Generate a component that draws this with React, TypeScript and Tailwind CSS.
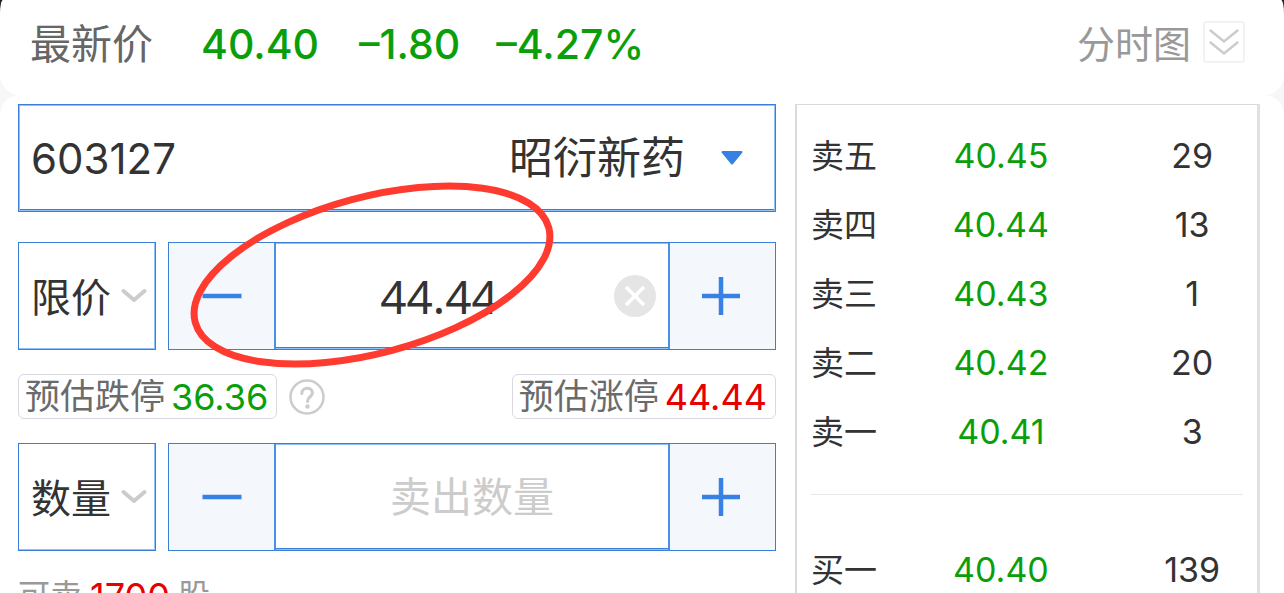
import React, { useState } from 'react';

interface QuoteLevel {
  label: string;
  price: string;
  volume: string;
}

const sellLevels: QuoteLevel[] = [
  { label: '卖五', price: '40.45', volume: '29' },
  { label: '卖四', price: '40.44', volume: '13' },
  { label: '卖三', price: '40.43', volume: '1' },
  { label: '卖二', price: '40.42', volume: '20' },
  { label: '卖一', price: '40.41', volume: '3' },
];

const buyLevels: QuoteLevel[] = [{ label: '买一', price: '40.40', volume: '139' }];

const SelectBox = ({ label, options }: { label: string, options: string[] }) => (
  <div className="relative w-[138px] h-[108px] shrink-0 border border-[#3a7fd5] shadow-[inset_-1px_-1px_0_#8fc1fa]">
    <select aria-label={label} className="w-full h-full pl-3 pt-1 appearance-none bg-transparent text-[40px] text-[#333] outline-none">
      {options.map(o => <option key={o}>{o}</option>)}
    </select>
    <svg className="absolute right-2 top-[45px] w-[26px] h-4 pointer-events-none" viewBox="0 0 26 16" fill="none" stroke="#ccc" strokeWidth="4" strokeLinecap="round" strokeLinejoin="round">
      <path d="M2.500 3 L13 12 L23.500 3" />
    </svg>
  </div>
);

const Stepper = ({ name, children }: { name: string, children: React.ReactNode }) => (
  <div className="flex flex-1 min-w-0 h-[108px] border border-[#3a7fd5] shadow-[inset_0_0_0_1px_#8fc1fa]">
    <button type="button" aria-label={`减少${name}`} className="w-[105px] shrink-0 flex items-center justify-center bg-[#f4f8fd]">
      <svg className="w-10 h-10" viewBox="0 0 40 40" fill="none" stroke="#3681e3" strokeWidth="4.500">
        <path d="M0.500 20 H39.500" />
      </svg>
    </button>
    <div className="flex flex-1 min-w-0 items-center border-x-2 border-[#4a90e8] shadow-[inset_0_1px_0_#8fc1fa,inset_0_-1px_0_#8fc1fa,inset_0_-2px_0_#3a7fd5]">
      {children}
    </div>
    <button type="button" aria-label={`增加${name}`} className="w-[105px] pr-1 shrink-0 flex items-center justify-center bg-[#f4f8fd]">
      <svg className="w-10 h-10" viewBox="0 0 40 40" fill="none" stroke="#3681e3" strokeWidth="4.500">
        <path d="M1 20 H39 M20 1 V39" />
      </svg>
    </button>
  </div>
);

const LimitTag = ({ label, value, color }: { label: string, value: string, color: string }) => (
  <button type="button" className="flex items-center h-[45px] pl-1.5 pr-2 gap-1.5 border border-[#d8d9e0] rounded-md whitespace-nowrap">
    <span className="text-[35px] leading-none text-[#6b6b6b]">{label}</span>
    <span className={`font-['Inter'] text-[36px] leading-none ${color}`}>{value}</span>
  </button>
);

const QuoteRow = ({ level }: { level: QuoteLevel }) => (
  <tr className="h-[69px] whitespace-nowrap">
    <th scope="row" className="w-[17%] p-0 pt-0.5 text-left font-normal text-[33px] text-[#333]">{level.label}</th>
    <td className="w-[53%] p-0 pl-1 text-center font-['Inter'] text-[34px] text-[#0a9f0a]">{level.price}</td>
    <td className="w-[30%] p-0 pl-7 text-center font-['Inter'] text-[34px] text-[#333]">{level.volume}</td>
  </tr>
);

const App: React.FC = () => {
  const [code, setCode] = useState('603127');
  const [price, setPrice] = useState('44.44');
  const [amount, setAmount] = useState('');

  return (
    <div className="relative h-screen overflow-hidden flex flex-col bg-[#f6f7f9] font-['Inter','Noto_Sans_CJK_SC',sans-serif]">
      {/* 行情栏 */}
      <div className="shrink-0 bg-linear-to-b from-[#222] from-50% to-[#f6f7f9] to-50%">
        <header className="flex items-center h-[95px] pl-[30px] pr-[39px] pb-1.5 bg-white rounded-b-[20px] rounded-tl-[3px_14px] rounded-tr-[3px_14px] whitespace-nowrap">
          <span className="text-[41px] text-[#666]">最新价</span>
          <div className="flex items-center ml-12 font-['Inter'] font-medium text-[41px] text-[#0a9f0a]">
            <span>40.40</span>
            <span className="ml-10">–1.80</span>
            <span className="ml-9">–4.27%</span>
          </div>
          <button type="button" className="flex items-center ml-auto gap-3 text-[38px] text-[#999]">
            分时图
            <svg className="w-[42px] h-[42px] mb-1.5" viewBox="0 0 42 42" fill="none">
              <rect x="1" y="1" width="40" height="40" rx="2" stroke="#eee" strokeWidth="1.500" />
              <path d="M7.500 9.500 L21 20.500 L34.500 9.500 M7.500 21.500 L21 32.500 L34.500 21.500" stroke="#ccc" strokeWidth="2.500" strokeLinecap="round" />
            </svg>
          </button>
        </header>
      </div>

      <main className="grid grid-cols-[minmax(0,758fr)_minmax(0,465fr)] flex-1 min-h-0 gap-[19px] pl-[18px] pr-6 pt-[9px] bg-white rounded-t-[20px]">
        {/* 下单区 */}
        <form>
          <div className="flex items-center h-[108px] pl-3 pr-8 border border-[#3a7fd5] shadow-[inset_1px_1px_0_#8fc1fa,inset_-1px_-1px_0_#8fc1fa,inset_0_-2px_0_#3a7fd5]">
            <input aria-label="股票代码" value={code} onChange={e => setCode(e.target.value)} className="flex-1 min-w-0 text-[42px] text-[#333] outline-none" />
            <button type="button" className="flex items-center gap-9 text-[44px] text-[#333] whitespace-nowrap">
              昭衍新药
              <svg className="w-[22px] h-4" viewBox="0 0 22 16" fill="#3681e3" stroke="#3681e3" strokeWidth="2" strokeLinejoin="round">
                <path d="M1.500 2 H20.500 L11 13.500 Z" />
              </svg>
            </button>
          </div>

          <div className="flex gap-3 mt-[30px]">
            <SelectBox label="委托方式" options={['限价', '市价']} />
            <Stepper name="价格">
              <input aria-label="委托价格" value={price} onChange={e => setPrice(e.target.value)} className="flex-1 min-w-0 h-full text-center font-['Noto_Sans'] text-[46px] text-[#333] outline-none bg-transparent" />
              <button type="button" aria-label="清空" onClick={() => setPrice('')} className="mx-3 shrink-0">
                <svg className="w-[42px] h-[42px]" viewBox="0 0 42 42" fill="none">
                  <circle cx="21" cy="21" r="21" fill="#e5e5e5" />
                  <path d="M12 12 L30 30 M30 12 L12 30" stroke="#fff" strokeWidth="3.500" />
                </svg>
              </button>
            </Stepper>
          </div>

          <div className="flex items-center mt-6">
            <LimitTag label="预估跌停" value="36.36" color="text-[#0a9f0a]" />
            <button type="button" aria-label="帮助" className="ml-3">
              <svg className="w-9 h-9" viewBox="0 0 36 36" fill="none" stroke="#ccc" strokeWidth="2.500" strokeLinecap="round">
                <circle cx="18" cy="18" r="16.500" />
                <path strokeWidth="3" d="M12.800 14.500 C12.800 7.500 23.500 7.700 23.500 13.800 C23.500 17.800 18.500 17.800 18.500 22.500" />
                <circle cx="18.500" cy="27.500" r="2.200" fill="#ccc" stroke="none" />
              </svg>
            </button>
            <div className="ml-auto">
              <LimitTag label="预估涨停" value="44.44" color="text-[#e60000]" />
            </div>
          </div>

          <div className="flex gap-3 mt-6">
            <SelectBox label="委托单位" options={['数量', '金额']} />
            <Stepper name="数量">
              <input aria-label="卖出数量" placeholder="卖出数量" value={amount} onChange={e => setAmount(e.target.value)} className="flex-1 min-w-0 h-full text-center text-[41px] text-[#333] placeholder:text-[#ccc] outline-none bg-transparent" />
            </Stepper>
          </div>

          <p className="flex items-center gap-2 mt-[18px] text-[32px] text-[#999]">
            可卖
            <span className="text-[36px] text-[#e60000]">1700</span>
            股
          </p>
        </form>

        {/* 五档盘口 */}
        <section className="px-3.5 pt-4 border-t border-l-2 border-r-3 border-[#d8dae0] border-r-[#dfe1e6]">
          <table className="w-full table-fixed border-collapse">
            <tbody>
              {sellLevels.map(l => <QuoteRow key={l.label} level={l} />)}
            </tbody>
            <tbody>
              <tr>
                <td colSpan={3} className="p-0 pt-7 pb-10">
                  <div className="border-t border-[#eaeaea]"></div>
                </td>
              </tr>
              {buyLevels.map(l => <QuoteRow key={l.label} level={l} />)}
            </tbody>
          </table>
        </section>
      </main>

      {/* 手绘标记 */}
      <svg className="absolute left-[186px] top-[178px] w-[372px] h-[194px] pointer-events-none" viewBox="0 0 372 194" fill="none">
        <ellipse cx="186" cy="97" rx="183" ry="78" transform="rotate(-15 186 97)" stroke="#ff3b30" strokeWidth="7" />
      </svg>
    </div>
  );
};

export default App;
